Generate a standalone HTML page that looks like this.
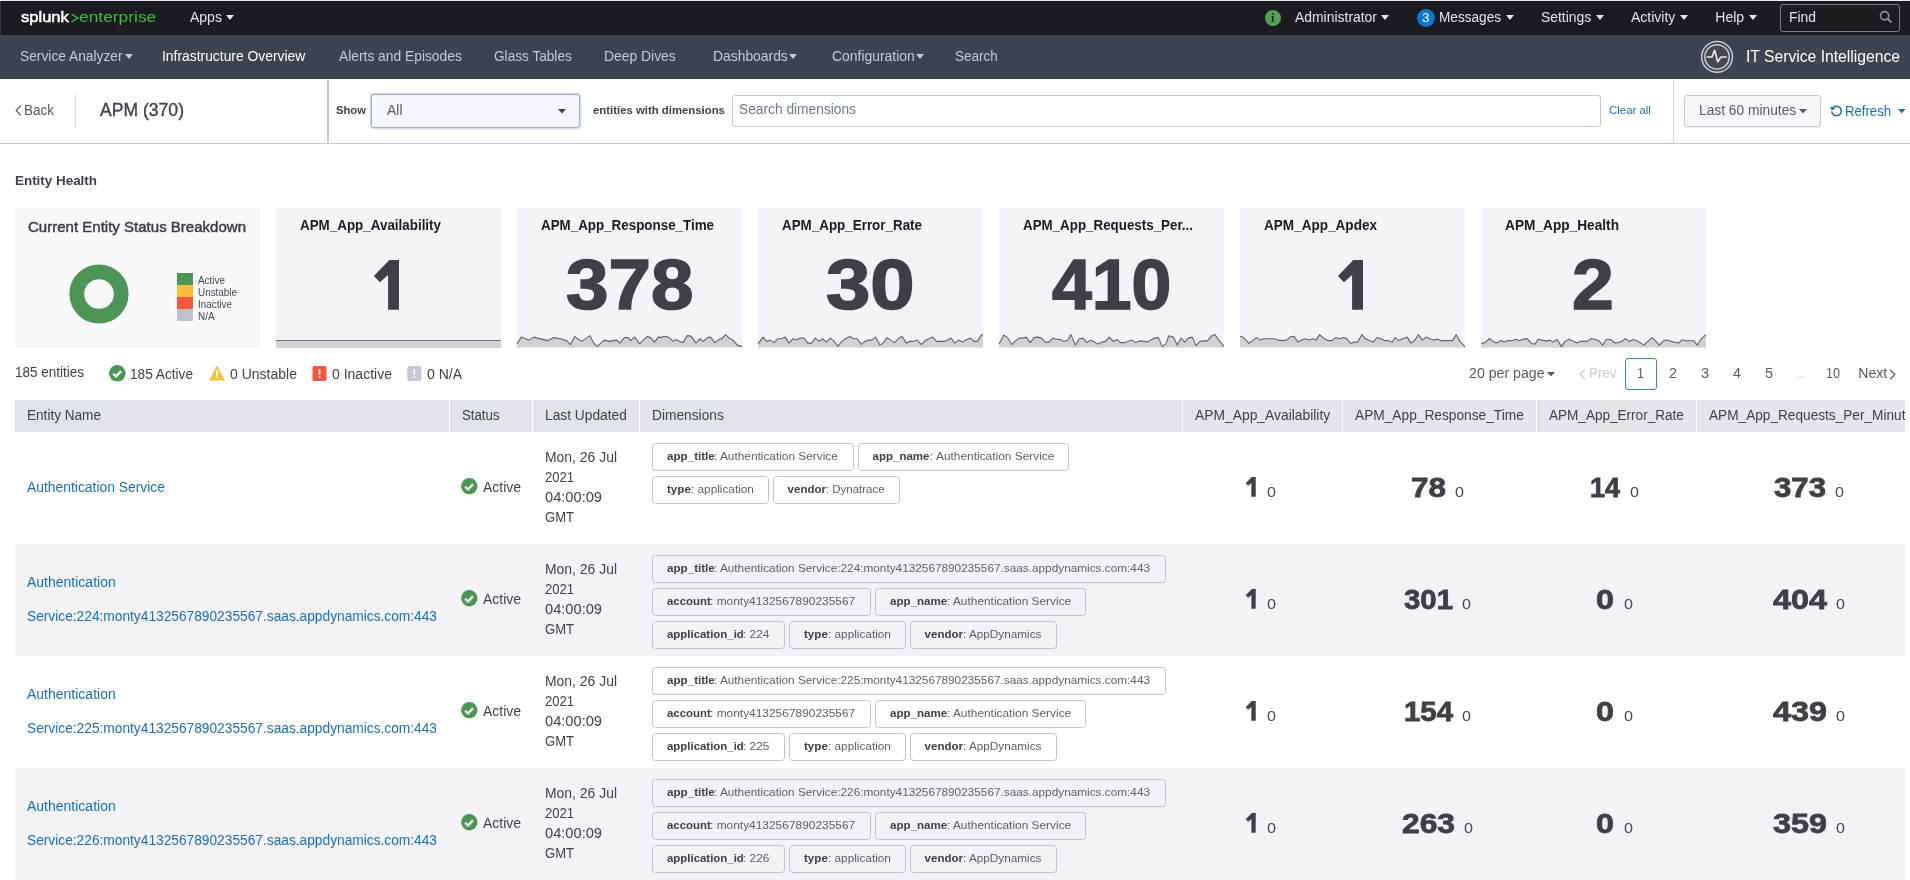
<!DOCTYPE html>
<html><head><meta charset="utf-8"><title>ITSI Infrastructure Overview</title>
<style>
html,body{margin:0;padding:0}
body{width:1910px;height:880px;overflow:hidden;position:relative;background:#fff;font-family:"Liberation Sans",sans-serif;}
span{display:block}
svg{position:absolute;overflow:visible}
</style></head><body><div style="position:absolute;left:0;top:0;width:1910px;height:880px;will-change:transform;">
<div style="position:absolute;left:0px;top:0px;width:1910px;height:35px;background:#1a1c21;"></div>
<div style="position:absolute;left:0px;top:0px;width:1910px;height:1px;background:#ececec;"></div>
<div style="position:absolute;left:0;top:1px;width:1px;height:78px;background:rgba(255,255,255,0.13)"></div>
<span style="position:absolute;left:20.5px;top:9.38px;font-size:15.5px;line-height:1;color:#ffffff;font-weight:400;white-space:nowrap;-webkit-text-stroke:0.55px #fff;transform:scaleX(1.0667);transform-origin:0 0;">splunk</span>
<svg style="left:70.5px;top:13px" width="8" height="10" viewBox="0 0 8 10"><path d="M0.6 1.2L6.8 5L0.6 8.8" fill="none" stroke="#3fba3f" stroke-width="1.4"/></svg>
<span style="position:absolute;left:79.3px;top:9.38px;font-size:15.5px;line-height:1;color:#3fba3f;font-weight:400;white-space:nowrap;transform:scaleX(1.1213);transform-origin:0 0;">enterprise</span>
<span style="position:absolute;left:190px;top:10.15px;font-size:14px;line-height:1;color:#e1e6eb;font-weight:400;white-space:nowrap;">Apps</span>
<svg style="left:226px;top:15px" width="8" height="5" viewBox="0 0 8 5"><path d="M0 0H8L4.0 5Z" fill="#e1e6eb"/></svg>
<div style="position:absolute;left:1264.6px;top:9.6px;width:16.4px;height:16.4px;border-radius:9px;background:#53a051"></div>
<span style="position:absolute;left:1271px;top:12.14px;font-size:12px;line-height:1;color:#1a1c20;font-weight:700;white-space:nowrap;font-family:'Liberation Serif',serif;">i</span>
<span style="position:absolute;left:1295px;top:10.15px;font-size:14px;line-height:1;color:#e1e6eb;font-weight:400;white-space:nowrap;transform:scaleX(0.9943);transform-origin:0 0;">Administrator</span>
<svg style="left:1381px;top:15px" width="8" height="5" viewBox="0 0 8 5"><path d="M0 0H8L4.0 5Z" fill="#e1e6eb"/></svg>
<div style="position:absolute;left:1416.6px;top:8.6px;width:18.4px;height:18.4px;border-radius:10px;background:#0877d6"></div>
<span style="position:absolute;left:1422px;top:11.17px;font-size:13.5px;line-height:1;color:#ffffff;font-weight:400;white-space:nowrap;">3</span>
<span style="position:absolute;left:1439.4px;top:10.15px;font-size:14px;line-height:1;color:#e1e6eb;font-weight:400;white-space:nowrap;transform:scaleX(0.9716);transform-origin:0 0;">Messages</span>
<svg style="left:1506px;top:15px" width="8" height="5" viewBox="0 0 8 5"><path d="M0 0H8L4.0 5Z" fill="#e1e6eb"/></svg>
<span style="position:absolute;left:1541.3px;top:10.15px;font-size:14px;line-height:1;color:#e1e6eb;font-weight:400;white-space:nowrap;transform:scaleX(0.9922);transform-origin:0 0;">Settings</span>
<svg style="left:1596px;top:15px" width="8" height="5" viewBox="0 0 8 5"><path d="M0 0H8L4.0 5Z" fill="#e1e6eb"/></svg>
<span style="position:absolute;left:1631px;top:10.15px;font-size:14px;line-height:1;color:#e1e6eb;font-weight:400;white-space:nowrap;">Activity</span>
<svg style="left:1680px;top:15px" width="8" height="5" viewBox="0 0 8 5"><path d="M0 0H8L4.0 5Z" fill="#e1e6eb"/></svg>
<span style="position:absolute;left:1715.3px;top:10.15px;font-size:14px;line-height:1;color:#e1e6eb;font-weight:400;white-space:nowrap;">Help</span>
<svg style="left:1749px;top:15px" width="8" height="5" viewBox="0 0 8 5"><path d="M0 0H8L4.0 5Z" fill="#e1e6eb"/></svg>
<div style="position:absolute;left:1780px;top:4px;width:118px;height:26px;background:#1c1b20;border:1px solid #7a7f87;border-radius:3px;"></div>
<span style="position:absolute;left:1789px;top:10.15px;font-size:14px;line-height:1;color:#e1e6eb;font-weight:400;white-space:nowrap;transform:scaleX(0.9914);transform-origin:0 0;">Find</span>
<svg style="left:1879px;top:10px" width="14" height="14" viewBox="0 0 14 14"><circle cx="5.6" cy="5.7" r="4.1" fill="none" stroke="#8d9096" stroke-width="1.7"/><path d="M8.7 8.8L12 12" stroke="#8d9096" stroke-width="2" stroke-linecap="round"/></svg>
<div style="position:absolute;left:0px;top:35px;width:1910px;height:44px;background:#3d434f;"></div>
<span style="position:absolute;left:20.2px;top:49.25px;font-size:14px;line-height:1;color:#c3cbd4;font-weight:400;white-space:nowrap;transform:scaleX(0.9839);transform-origin:0 0;">Service Analyzer</span>
<svg style="left:125px;top:54px" width="8" height="5" viewBox="0 0 8 5"><path d="M0 0H8L4.0 5Z" fill="#c3cbd4"/></svg>
<span style="position:absolute;left:162.3px;top:49.25px;font-size:14px;line-height:1;color:#ffffff;font-weight:400;white-space:nowrap;transform:scaleX(0.9902);transform-origin:0 0;">Infrastructure Overview</span>
<span style="position:absolute;left:338.7px;top:49.25px;font-size:14px;line-height:1;color:#c3cbd4;font-weight:400;white-space:nowrap;transform:scaleX(0.9861);transform-origin:0 0;">Alerts and Episodes</span>
<span style="position:absolute;left:493.7px;top:49.25px;font-size:14px;line-height:1;color:#c3cbd4;font-weight:400;white-space:nowrap;transform:scaleX(0.9736);transform-origin:0 0;">Glass Tables</span>
<span style="position:absolute;left:603.7px;top:49.25px;font-size:14px;line-height:1;color:#c3cbd4;font-weight:400;white-space:nowrap;transform:scaleX(0.9921);transform-origin:0 0;">Deep Dives</span>
<span style="position:absolute;left:712.7px;top:49.25px;font-size:14px;line-height:1;color:#c3cbd4;font-weight:400;white-space:nowrap;transform:scaleX(0.9907);transform-origin:0 0;">Dashboards</span>
<svg style="left:789px;top:54px" width="8" height="5" viewBox="0 0 8 5"><path d="M0 0H8L4.0 5Z" fill="#c3cbd4"/></svg>
<span style="position:absolute;left:831.7px;top:49.25px;font-size:14px;line-height:1;color:#c3cbd4;font-weight:400;white-space:nowrap;transform:scaleX(0.9942);transform-origin:0 0;">Configuration</span>
<svg style="left:916px;top:54px" width="8" height="5" viewBox="0 0 8 5"><path d="M0 0H8L4.0 5Z" fill="#c3cbd4"/></svg>
<span style="position:absolute;left:954.7px;top:49.25px;font-size:14px;line-height:1;color:#c3cbd4;font-weight:400;white-space:nowrap;transform:scaleX(0.9648);transform-origin:0 0;">Search</span>
<svg style="left:1700px;top:40px" width="34" height="34" viewBox="0 0 34 34"><circle cx="17.05" cy="16.9" r="15.4" fill="none" stroke="#c9cdd8" stroke-width="1.5"/><circle cx="17.05" cy="16.9" r="12.2" fill="#46484e" stroke="#c9cdd8" stroke-width="1.5"/><path d="M6.7 17H12L14.6 10.3L17.7 21.8L21 17H26.8" fill="none" stroke="#e6e6ea" stroke-width="1.7" stroke-linejoin="round"/></svg>
<span style="position:absolute;left:1745.6px;top:48.03px;font-size:16.5px;line-height:1;color:#ffffff;font-weight:400;white-space:nowrap;transform:scaleX(0.9504);transform-origin:0 0;">IT Service Intelligence</span>
<div style="position:absolute;left:0px;top:143px;width:1910px;height:1px;background:#c3cbd4;"></div>
<div style="position:absolute;left:327px;top:80px;width:2px;height:63px;background:#c3cbd4;"></div>
<div style="position:absolute;left:1673px;top:80px;width:1px;height:63px;background:#d5dae0;"></div>
<svg style="left:15px;top:105px" width="7" height="11" viewBox="0 0 7 11"><path d="M5.8 0.8L1.2 5.5L5.8 10.2" fill="none" stroke="#5c6773" stroke-width="1.3"/></svg>
<span style="position:absolute;left:24px;top:103.15px;font-size:14px;line-height:1;color:#4f5660;font-weight:400;white-space:nowrap;transform:scaleX(0.9639);transform-origin:0 0;">Back</span>
<div style="position:absolute;left:75px;top:95px;width:1px;height:32px;background:#d5dae0;"></div>
<span style="position:absolute;left:100px;top:102.19px;font-size:17.5px;line-height:1;color:#3e424a;font-weight:400;white-space:nowrap;-webkit-text-stroke:0.35px #3e424a;transform:scaleX(1.0043);transform-origin:0 0;">APM (370)</span>
<span style="position:absolute;left:335.7px;top:105.17px;font-size:11.5px;line-height:1;color:#3e424a;font-weight:700;white-space:nowrap;transform:scaleX(0.9748);transform-origin:0 0;">Show</span>
<div style="position:absolute;left:371.3px;top:94.2px;width:206.6px;height:31.4px;background:#f5f6fb;border:1px solid #a3aec4;border-radius:3px;box-shadow:0 0 0 1.3px #d3d9ec;"></div>
<span style="position:absolute;left:386.8px;top:103.15px;font-size:14px;line-height:1;color:#565d66;font-weight:400;white-space:nowrap;transform:scaleX(0.9960);transform-origin:0 0;">All</span>
<svg style="left:557.6px;top:108.5px" width="8" height="4.5" viewBox="0 0 8 4.5"><path d="M0 0H8L4.0 4.5Z" fill="#3c444d"/></svg>
<span style="position:absolute;left:592.7px;top:105.17px;font-size:11.5px;line-height:1;color:#3e424a;font-weight:700;white-space:nowrap;transform:scaleX(0.9876);transform-origin:0 0;">entities with dimensions</span>
<div style="position:absolute;left:732px;top:95px;width:867px;height:30.299999999999997px;background:#fff;border:1px solid #c3cbd4;border-radius:3px;"></div>
<span style="position:absolute;left:739px;top:102.15px;font-size:14px;line-height:1;color:#6b7785;font-weight:400;white-space:nowrap;transform:scaleX(0.9827);transform-origin:0 0;">Search dimensions</span>
<span style="position:absolute;left:1608.5px;top:105.07px;font-size:11.5px;line-height:1;color:#1a6fb5;font-weight:400;white-space:nowrap;transform:scaleX(0.9932);transform-origin:0 0;">Clear all</span>
<div style="position:absolute;left:1684.2px;top:95.4px;width:134.4px;height:29.4px;background:#f6f6fa;border:1px solid #c3cbd4;border-radius:3px;box-shadow:0 1px 1px rgba(0,0,0,0.08);"></div>
<span style="position:absolute;left:1699px;top:103.35px;font-size:14px;line-height:1;color:#565d66;font-weight:400;white-space:nowrap;transform:scaleX(0.9834);transform-origin:0 0;">Last 60 minutes</span>
<svg style="left:1798.6px;top:108.6px" width="8" height="4.5" viewBox="0 0 8 4.5"><path d="M0 0H8L4.0 4.5Z" fill="#565d66"/></svg>
<svg style="left:1830px;top:104px" width="13" height="13" viewBox="0 0 13 13"><path d="M2.4 4.4A4.8 4.8 0 1 1 1.7 7.4" fill="none" stroke="#1a6fb5" stroke-width="1.5"/><path d="M0.2 2.6L1.6 6.4L5.2 4.4Z" fill="#1a6fb5"/></svg>
<span style="position:absolute;left:1845.4px;top:103.75px;font-size:14px;line-height:1;color:#1a6fb5;font-weight:400;white-space:nowrap;transform:scaleX(0.9402);transform-origin:0 0;">Refresh</span>
<svg style="left:1897.6px;top:108.8px" width="7.4" height="4.5" viewBox="0 0 7.4 4.5"><path d="M0 0H7.4L3.7 4.5Z" fill="#1a6fb5"/></svg>
<span style="position:absolute;left:15px;top:173.57px;font-size:13.5px;line-height:1;color:#3e424a;font-weight:700;white-space:nowrap;transform:scaleX(0.9938);transform-origin:0 0;">Entity Health</span>
<div style="position:absolute;left:15px;top:208px;width:245px;height:139.6px;background:#f8f8fb;"></div>
<span style="position:absolute;left:28.3px;top:219.48px;font-size:15.5px;line-height:1;color:#3a3d45;font-weight:400;white-space:nowrap;-webkit-text-stroke:0.45px #3a3d45;transform:scaleX(0.9695);transform-origin:0 0;">Current Entity Status Breakdown</span>
<svg style="left:68.6px;top:263.5px" width="60" height="60" viewBox="0 0 60 60"><circle cx="30" cy="30" r="22.2" fill="none" stroke="#4d9554" stroke-width="14.7"/></svg>
<div style="position:absolute;left:177px;top:273px;width:16px;height:12px;background:#4d9554;"></div>
<span style="position:absolute;left:198.2px;top:276.14px;font-size:10px;line-height:1;color:#45484f;font-weight:400;white-space:nowrap;transform:scaleX(0.9914);transform-origin:0 0;">Active</span>
<div style="position:absolute;left:177px;top:285px;width:16px;height:12px;background:#f8be34;"></div>
<span style="position:absolute;left:198.2px;top:288.14px;font-size:10px;line-height:1;color:#45484f;font-weight:400;white-space:nowrap;transform:scaleX(0.9881);transform-origin:0 0;">Unstable</span>
<div style="position:absolute;left:177px;top:297px;width:16px;height:12px;background:#f1583e;"></div>
<span style="position:absolute;left:198.2px;top:300.14px;font-size:10px;line-height:1;color:#45484f;font-weight:400;white-space:nowrap;transform:scaleX(0.9864);transform-origin:0 0;">Inactive</span>
<div style="position:absolute;left:177px;top:309px;width:16px;height:12px;background:#bcc3d0;"></div>
<span style="position:absolute;left:198.2px;top:312.14px;font-size:10px;line-height:1;color:#45484f;font-weight:400;white-space:nowrap;transform:scaleX(0.9897);transform-origin:0 0;">N/A</span>
<div style="position:absolute;left:276px;top:208px;width:225px;height:139.6px;background:#f4f4f8;"></div>
<span style="position:absolute;left:300px;top:218.45px;font-size:14px;line-height:1;color:#1a1c20;font-weight:700;white-space:nowrap;transform:scaleX(0.9573);transform-origin:0 0;">APM_App_Availability</span>
<svg style="left:0;top:0" width="1910" height="880"><polygon points="389.30,260.10 399.00,260.10 399.00,309.70 388.10,309.70 388.10,275.10 380.00,282.20 373.90,275.90" fill="#403f46"/></svg>
<div style="position:absolute;left:276px;top:340.6px;width:225px;height:7.0px;background:#d2d2d8;"></div>
<div style="position:absolute;left:276px;top:339.6px;width:225px;height:1.5px;background:#6f6f77;"></div>
<div style="position:absolute;left:517px;top:208px;width:225px;height:139.6px;background:#f4f4f8;"></div>
<span style="position:absolute;left:541px;top:218.45px;font-size:14px;line-height:1;color:#1a1c20;font-weight:700;white-space:nowrap;transform:scaleX(0.9557);transform-origin:0 0;">APM_App_Response_Time</span>
<span style="position:absolute;left:565.6px;top:249.81px;font-size:70.4px;line-height:1;color:#403f46;font-weight:700;white-space:nowrap;-webkit-text-stroke:1.6px #403f46;transform:scaleX(1.0847);transform-origin:0 0;">378</span>
<svg style="left:0;top:0" width="1910" height="360"><polygon points="517,347.6 517.0,343.9 521.3,337.1 528.8,340.1 533.9,337.1 542.7,339.4 547.7,340.6 554.0,337.6 560.3,338.8 566.5,340.6 570.3,344.4 574.8,336.6 581.6,341.4 589.9,335.6 593.4,342.6 597.2,346.4 604.2,340.1 609.3,341.4 616.8,340.1 619.8,343.1 624.4,337.6 628.1,337.6 630.6,340.6 634.9,337.1 639.4,343.9 647.0,336.6 650.7,337.6 654.5,342.1 658.3,337.1 660.8,337.6 664.6,336.3 668.3,337.1 673.4,341.4 675.9,339.6 680.9,342.1 683.4,342.1 687.2,335.6 690.9,336.1 696.0,343.1 699.7,338.8 703.5,341.4 707.3,337.6 710.6,337.1 714.8,342.6 718.6,339.6 721.6,338.8 725.6,334.6 729.9,338.8 732.4,339.6 737.4,345.1 742.0,346.4 742,347.6" fill="#d0d0d6"/><polyline points="517.0,343.9 521.3,337.1 528.8,340.1 533.9,337.1 542.7,339.4 547.7,340.6 554.0,337.6 560.3,338.8 566.5,340.6 570.3,344.4 574.8,336.6 581.6,341.4 589.9,335.6 593.4,342.6 597.2,346.4 604.2,340.1 609.3,341.4 616.8,340.1 619.8,343.1 624.4,337.6 628.1,337.6 630.6,340.6 634.9,337.1 639.4,343.9 647.0,336.6 650.7,337.6 654.5,342.1 658.3,337.1 660.8,337.6 664.6,336.3 668.3,337.1 673.4,341.4 675.9,339.6 680.9,342.1 683.4,342.1 687.2,335.6 690.9,336.1 696.0,343.1 699.7,338.8 703.5,341.4 707.3,337.6 710.6,337.1 714.8,342.6 718.6,339.6 721.6,338.8 725.6,334.6 729.9,338.8 732.4,339.6 737.4,345.1 742.0,346.4" fill="none" stroke="#62626a" stroke-width="1.1" stroke-linejoin="round"/></svg>
<div style="position:absolute;left:758px;top:208px;width:225px;height:139.6px;background:#f4f4f8;"></div>
<span style="position:absolute;left:782px;top:218.45px;font-size:14px;line-height:1;color:#1a1c20;font-weight:700;white-space:nowrap;transform:scaleX(0.9572);transform-origin:0 0;">APM_App_Error_Rate</span>
<span style="position:absolute;left:826px;top:249.81px;font-size:70.4px;line-height:1;color:#403f46;font-weight:700;white-space:nowrap;-webkit-text-stroke:1.6px #403f46;transform:scaleX(1.1316);transform-origin:0 0;">30</span>
<svg style="left:0;top:0" width="1910" height="360"><polygon points="758,347.6 758.0,343.9 763.1,337.1 766.8,341.4 770.1,340.1 773.9,342.6 777.7,338.8 781.4,338.8 785.2,337.1 789.0,343.1 792.7,338.8 796.5,340.1 800.3,338.1 804.0,338.1 807.8,343.1 811.6,343.1 815.4,338.1 819.1,341.4 822.9,338.8 826.2,342.1 830.4,338.1 834.2,341.4 838.0,346.4 841.7,341.4 845.5,338.8 849.8,336.6 853.6,338.8 857.3,338.8 861.3,344.4 864.9,341.4 868.6,340.1 871.9,340.1 875.7,337.1 879.9,345.1 883.2,343.1 887.0,337.6 890.7,340.1 894.5,342.6 898.3,338.8 902.1,336.3 906.3,343.1 909.6,341.4 913.4,341.4 917.1,340.1 921.4,344.6 925.2,340.6 928.9,338.8 932.7,337.1 936.5,341.4 940.3,341.4 944.8,341.4 951.1,338.1 954.8,343.1 958.6,340.1 962.4,341.9 966.1,340.1 970.4,338.1 974.2,341.4 977.5,341.4 981.2,335.1 983.0,334.6 983,347.6" fill="#d0d0d6"/><polyline points="758.0,343.9 763.1,337.1 766.8,341.4 770.1,340.1 773.9,342.6 777.7,338.8 781.4,338.8 785.2,337.1 789.0,343.1 792.7,338.8 796.5,340.1 800.3,338.1 804.0,338.1 807.8,343.1 811.6,343.1 815.4,338.1 819.1,341.4 822.9,338.8 826.2,342.1 830.4,338.1 834.2,341.4 838.0,346.4 841.7,341.4 845.5,338.8 849.8,336.6 853.6,338.8 857.3,338.8 861.3,344.4 864.9,341.4 868.6,340.1 871.9,340.1 875.7,337.1 879.9,345.1 883.2,343.1 887.0,337.6 890.7,340.1 894.5,342.6 898.3,338.8 902.1,336.3 906.3,343.1 909.6,341.4 913.4,341.4 917.1,340.1 921.4,344.6 925.2,340.6 928.9,338.8 932.7,337.1 936.5,341.4 940.3,341.4 944.8,341.4 951.1,338.1 954.8,343.1 958.6,340.1 962.4,341.9 966.1,340.1 970.4,338.1 974.2,341.4 977.5,341.4 981.2,335.1 983.0,334.6" fill="none" stroke="#62626a" stroke-width="1.1" stroke-linejoin="round"/></svg>
<div style="position:absolute;left:999px;top:208px;width:225px;height:139.6px;background:#f4f4f8;"></div>
<span style="position:absolute;left:1023px;top:218.45px;font-size:14px;line-height:1;color:#1a1c20;font-weight:700;white-space:nowrap;transform:scaleX(0.9541);transform-origin:0 0;">APM_App_Requests_Per...</span>
<span style="position:absolute;left:1051.6px;top:249.81px;font-size:70.4px;line-height:1;color:#403f46;font-weight:700;white-space:nowrap;-webkit-text-stroke:1.6px #403f46;transform:scaleX(1.0166);transform-origin:0 0;">410</span>
<svg style="left:0;top:0" width="1910" height="360"><polygon points="999,347.6 999.0,343.9 1003.8,335.1 1007.6,337.6 1011.4,344.6 1015.1,341.4 1018.9,338.1 1022.7,338.1 1026.4,337.1 1030.2,342.6 1034.0,337.6 1037.8,337.1 1041.5,338.1 1045.3,342.1 1049.1,342.1 1052.8,338.1 1056.6,339.4 1060.4,339.6 1064.1,341.4 1067.9,340.1 1070.9,334.6 1075.4,345.1 1079.2,338.8 1083.0,338.1 1086.8,342.6 1090.5,340.1 1094.3,342.1 1098.1,343.9 1101.8,342.1 1105.6,341.4 1109.4,337.1 1113.1,341.4 1116.9,339.6 1120.7,342.6 1124.5,342.6 1128.2,341.4 1132.0,340.1 1135.8,342.6 1139.5,340.9 1143.3,341.4 1147.1,341.9 1150.8,340.1 1154.6,338.1 1158.4,337.6 1162.2,346.4 1165.9,343.9 1168.9,335.8 1173.5,337.1 1177.2,345.1 1181.0,338.1 1184.8,342.1 1188.5,338.1 1192.3,337.1 1196.1,345.6 1199.9,341.4 1203.6,340.9 1207.4,340.9 1211.2,336.3 1214.9,334.3 1218.7,340.1 1224.0,346.4 1224,347.6" fill="#d0d0d6"/><polyline points="999.0,343.9 1003.8,335.1 1007.6,337.6 1011.4,344.6 1015.1,341.4 1018.9,338.1 1022.7,338.1 1026.4,337.1 1030.2,342.6 1034.0,337.6 1037.8,337.1 1041.5,338.1 1045.3,342.1 1049.1,342.1 1052.8,338.1 1056.6,339.4 1060.4,339.6 1064.1,341.4 1067.9,340.1 1070.9,334.6 1075.4,345.1 1079.2,338.8 1083.0,338.1 1086.8,342.6 1090.5,340.1 1094.3,342.1 1098.1,343.9 1101.8,342.1 1105.6,341.4 1109.4,337.1 1113.1,341.4 1116.9,339.6 1120.7,342.6 1124.5,342.6 1128.2,341.4 1132.0,340.1 1135.8,342.6 1139.5,340.9 1143.3,341.4 1147.1,341.9 1150.8,340.1 1154.6,338.1 1158.4,337.6 1162.2,346.4 1165.9,343.9 1168.9,335.8 1173.5,337.1 1177.2,345.1 1181.0,338.1 1184.8,342.1 1188.5,338.1 1192.3,337.1 1196.1,345.6 1199.9,341.4 1203.6,340.9 1207.4,340.9 1211.2,336.3 1214.9,334.3 1218.7,340.1 1224.0,346.4" fill="none" stroke="#62626a" stroke-width="1.1" stroke-linejoin="round"/></svg>
<div style="position:absolute;left:1240px;top:208px;width:225px;height:139.6px;background:#f4f4f8;"></div>
<span style="position:absolute;left:1264px;top:218.45px;font-size:14px;line-height:1;color:#1a1c20;font-weight:700;white-space:nowrap;transform:scaleX(0.9684);transform-origin:0 0;">APM_App_Apdex</span>
<svg style="left:0;top:0" width="1910" height="880"><polygon points="1353.30,260.10 1363.00,260.10 1363.00,309.70 1352.10,309.70 1352.10,275.10 1344.00,282.20 1337.90,275.90" fill="#403f46"/></svg>
<svg style="left:0;top:0" width="1910" height="360"><polygon points="1240,347.6 1240.0,336.3 1243.8,337.6 1248.9,343.4 1252.6,340.6 1256.4,337.6 1260.2,340.1 1263.9,338.8 1269.0,338.8 1274.0,338.8 1277.8,340.1 1282.8,340.6 1286.6,340.1 1290.3,336.8 1294.1,336.3 1297.9,342.1 1301.6,340.1 1305.4,338.8 1309.2,340.1 1312.9,338.8 1316.0,340.1 1319.7,334.6 1324.3,338.8 1328.0,340.6 1331.8,340.6 1335.6,337.6 1339.3,338.8 1343.1,337.6 1346.9,338.8 1350.6,343.4 1354.4,342.1 1357.7,342.1 1362.0,334.6 1365.7,338.8 1369.5,340.6 1373.3,341.9 1377.0,337.6 1380.8,338.8 1384.6,340.6 1388.3,340.6 1392.1,342.1 1395.1,337.6 1398.9,340.6 1402.7,338.8 1407.2,337.1 1411.0,343.1 1414.7,340.1 1418.5,334.6 1422.3,340.1 1426.0,337.1 1429.8,338.8 1433.6,340.1 1437.3,339.1 1441.1,340.6 1446.1,340.6 1452.4,340.6 1456.2,334.6 1460.0,341.4 1465.0,346.9 1465,347.6" fill="#d0d0d6"/><polyline points="1240.0,336.3 1243.8,337.6 1248.9,343.4 1252.6,340.6 1256.4,337.6 1260.2,340.1 1263.9,338.8 1269.0,338.8 1274.0,338.8 1277.8,340.1 1282.8,340.6 1286.6,340.1 1290.3,336.8 1294.1,336.3 1297.9,342.1 1301.6,340.1 1305.4,338.8 1309.2,340.1 1312.9,338.8 1316.0,340.1 1319.7,334.6 1324.3,338.8 1328.0,340.6 1331.8,340.6 1335.6,337.6 1339.3,338.8 1343.1,337.6 1346.9,338.8 1350.6,343.4 1354.4,342.1 1357.7,342.1 1362.0,334.6 1365.7,338.8 1369.5,340.6 1373.3,341.9 1377.0,337.6 1380.8,338.8 1384.6,340.6 1388.3,340.6 1392.1,342.1 1395.1,337.6 1398.9,340.6 1402.7,338.8 1407.2,337.1 1411.0,343.1 1414.7,340.1 1418.5,334.6 1422.3,340.1 1426.0,337.1 1429.8,338.8 1433.6,340.1 1437.3,339.1 1441.1,340.6 1446.1,340.6 1452.4,340.6 1456.2,334.6 1460.0,341.4 1465.0,346.9" fill="none" stroke="#62626a" stroke-width="1.1" stroke-linejoin="round"/></svg>
<div style="position:absolute;left:1481px;top:208px;width:225px;height:139.6px;background:#f4f4f8;"></div>
<span style="position:absolute;left:1505px;top:218.45px;font-size:14px;line-height:1;color:#1a1c20;font-weight:700;white-space:nowrap;transform:scaleX(0.9770);transform-origin:0 0;">APM_App_Health</span>
<span style="position:absolute;left:1572.4px;top:249.81px;font-size:70.4px;line-height:1;color:#403f46;font-weight:700;white-space:nowrap;-webkit-text-stroke:1.6px #403f46;transform:scaleX(1.0675);transform-origin:0 0;">2</span>
<svg style="left:0;top:0" width="1910" height="360"><polygon points="1481,347.6 1481.0,343.2 1485.1,342.6 1489.5,338.5 1493.2,341.6 1496.8,343.0 1500.8,340.4 1504.2,342.0 1507.7,340.4 1511.5,340.7 1515.9,339.2 1519.4,340.7 1523.4,339.1 1527.2,338.6 1530.9,342.9 1534.7,344.3 1538.5,339.2 1542.3,340.1 1546.0,341.1 1549.8,340.1 1552.9,342.0 1557.3,339.5 1561.4,346.6 1564.9,341.6 1568.9,339.2 1573.0,341.0 1576.8,342.9 1580.6,341.4 1584.4,341.4 1587.5,341.1 1591.6,338.5 1595.7,339.5 1598.8,340.7 1602.6,345.1 1606.3,339.5 1610.7,339.5 1614.8,343.0 1618.3,342.6 1621.4,341.6 1625.4,338.8 1629.3,341.4 1633.1,339.5 1637.1,340.7 1644.0,345.1 1648.4,340.7 1652.0,337.6 1655.3,340.7 1659.4,345.1 1663.5,340.7 1667.3,340.1 1671.1,341.4 1674.8,342.2 1678.6,343.0 1682.4,339.7 1686.1,340.7 1689.9,340.7 1693.7,340.7 1697.2,345.1 1701.2,338.8 1706.0,334.7 1706,347.6" fill="#d0d0d6"/><polyline points="1481.0,343.2 1485.1,342.6 1489.5,338.5 1493.2,341.6 1496.8,343.0 1500.8,340.4 1504.2,342.0 1507.7,340.4 1511.5,340.7 1515.9,339.2 1519.4,340.7 1523.4,339.1 1527.2,338.6 1530.9,342.9 1534.7,344.3 1538.5,339.2 1542.3,340.1 1546.0,341.1 1549.8,340.1 1552.9,342.0 1557.3,339.5 1561.4,346.6 1564.9,341.6 1568.9,339.2 1573.0,341.0 1576.8,342.9 1580.6,341.4 1584.4,341.4 1587.5,341.1 1591.6,338.5 1595.7,339.5 1598.8,340.7 1602.6,345.1 1606.3,339.5 1610.7,339.5 1614.8,343.0 1618.3,342.6 1621.4,341.6 1625.4,338.8 1629.3,341.4 1633.1,339.5 1637.1,340.7 1644.0,345.1 1648.4,340.7 1652.0,337.6 1655.3,340.7 1659.4,345.1 1663.5,340.7 1667.3,340.1 1671.1,341.4 1674.8,342.2 1678.6,343.0 1682.4,339.7 1686.1,340.7 1689.9,340.7 1693.7,340.7 1697.2,345.1 1701.2,338.8 1706.0,334.7" fill="none" stroke="#62626a" stroke-width="1.1" stroke-linejoin="round"/></svg>
<span style="position:absolute;left:15px;top:365.45px;font-size:14px;line-height:1;color:#3e424a;font-weight:400;white-space:nowrap;transform:scaleX(0.9636);transform-origin:0 0;">185 entities</span>
<svg style="left:109px;top:365.4px" width="16.6" height="16.6" viewBox="0 0 16 16"><circle cx="8" cy="8" r="8" fill="#4d9554"/><path d="M4 8.5L6.9 11L11.5 5.9" fill="none" stroke="#fff" stroke-width="2.2"/></svg>
<span style="position:absolute;left:130px;top:367.15px;font-size:14px;line-height:1;color:#3e424a;font-weight:400;white-space:nowrap;transform:scaleX(0.9751);transform-origin:0 0;">185 Active</span>
<svg style="left:208.8px;top:365.2px" width="16" height="16" viewBox="0 0 16 16"><path d="M8 0.4L15.8 15.4H0.2Z" fill="#f8be34"/><rect x="7.1" y="5" width="1.8" height="5.6" fill="#fff"/><rect x="7.1" y="11.6" width="1.8" height="1.8" fill="#fff"/></svg>
<span style="position:absolute;left:230px;top:367.15px;font-size:14px;line-height:1;color:#3e424a;font-weight:400;white-space:nowrap;">0 Unstable</span>
<svg style="left:311.8px;top:365.8px" width="15" height="15" viewBox="0 0 15 16"><rect width="15" height="16" rx="2" fill="#f1583e"/><rect x="6.6" y="3.5" width="1.8" height="5.8" fill="#fff"/><rect x="6.6" y="10.6" width="1.8" height="1.9" fill="#fff"/></svg>
<span style="position:absolute;left:332px;top:367.15px;font-size:14px;line-height:1;color:#3e424a;font-weight:400;white-space:nowrap;">0 Inactive</span>
<svg style="left:407px;top:366.2px" width="14.6" height="15" viewBox="0 0 15 16"><rect width="15" height="16" rx="2" fill="#c6c9d0"/><rect x="6.6" y="3.5" width="1.8" height="5.8" fill="#fff"/><rect x="6.6" y="10.6" width="1.8" height="1.9" fill="#fff"/></svg>
<span style="position:absolute;left:427px;top:367.15px;font-size:14px;line-height:1;color:#3e424a;font-weight:400;white-space:nowrap;">0 N/A</span>
<span style="position:absolute;left:1469.4px;top:366.45px;font-size:14px;line-height:1;color:#565d66;font-weight:400;white-space:nowrap;transform:scaleX(1.0116);transform-origin:0 0;">20 per page</span>
<svg style="left:1547px;top:372px" width="8" height="4.5" viewBox="0 0 8 4.5"><path d="M0 0H8L4.0 4.5Z" fill="#565d66"/></svg>
<svg style="left:1579px;top:369px" width="7" height="11" viewBox="0 0 7 11"><path d="M5.8 0.8L1.2 5.5L5.8 10.2" fill="none" stroke="#c3cbd4" stroke-width="1.3"/></svg>
<span style="position:absolute;left:1588.5px;top:366.45px;font-size:14px;line-height:1;color:#c3cbd4;font-weight:400;white-space:nowrap;transform:scaleX(0.9550);transform-origin:0 0;">Prev</span>
<div style="position:absolute;left:1625px;top:358px;width:30px;height:30px;background:#fff;border:1px solid #3d7fd0;border-radius:3px;"></div>
<span style="position:absolute;left:1637px;top:366.45px;font-size:14px;line-height:1;color:#565d66;font-weight:400;white-space:nowrap;transform:scaleX(0.8978);transform-origin:0 0;">1</span>
<span style="position:absolute;left:1669px;top:366.45px;font-size:14px;line-height:1;color:#565d66;font-weight:400;white-space:nowrap;transform:scaleX(1.0261);transform-origin:0 0;">2</span>
<span style="position:absolute;left:1701px;top:366.45px;font-size:14px;line-height:1;color:#565d66;font-weight:400;white-space:nowrap;transform:scaleX(1.0261);transform-origin:0 0;">3</span>
<span style="position:absolute;left:1733px;top:366.45px;font-size:14px;line-height:1;color:#565d66;font-weight:400;white-space:nowrap;transform:scaleX(1.0261);transform-origin:0 0;">4</span>
<span style="position:absolute;left:1765px;top:366.45px;font-size:14px;line-height:1;color:#565d66;font-weight:400;white-space:nowrap;transform:scaleX(1.0261);transform-origin:0 0;">5</span>
<span style="position:absolute;left:1826px;top:366.45px;font-size:14px;line-height:1;color:#565d66;font-weight:400;white-space:nowrap;transform:scaleX(0.8987);transform-origin:0 0;">10</span>
<span style="position:absolute;left:1796px;top:368.14px;font-size:12px;line-height:1;color:#c3cbd4;font-weight:400;white-space:nowrap;">...</span>
<span style="position:absolute;left:1858.3px;top:366.45px;font-size:14px;line-height:1;color:#565d66;font-weight:400;white-space:nowrap;">Next</span>
<svg style="left:1889px;top:369px" width="7" height="11" viewBox="0 0 7 11"><path d="M1.2 0.8L5.8 5.5L1.2 10.2" fill="none" stroke="#5c6773" stroke-width="1.3"/></svg>
<div style="position:absolute;left:15px;top:400px;width:1890px;height:32px;background:linear-gradient(90deg,#e0e3ec 0%,#e2e4eb 45%,#e7e5ea 85%,#e6e5eb 100%);"></div>
<div style="position:absolute;left:449px;top:400px;width:1px;height:32px;background:#ffffff;"></div>
<div style="position:absolute;left:532px;top:400px;width:1px;height:32px;background:#ffffff;"></div>
<div style="position:absolute;left:639px;top:400px;width:1px;height:32px;background:#ffffff;"></div>
<div style="position:absolute;left:1182px;top:400px;width:1px;height:32px;background:#ffffff;"></div>
<div style="position:absolute;left:1342px;top:400px;width:1px;height:32px;background:#ffffff;"></div>
<div style="position:absolute;left:1536px;top:400px;width:1px;height:32px;background:#ffffff;"></div>
<div style="position:absolute;left:1696px;top:400px;width:1px;height:32px;background:#ffffff;"></div>
<div style="position:absolute;left:1697px;top:400px;width:208px;height:32px;overflow:hidden">
<span style="position:absolute;left:12px;top:8.15px;font-size:14px;line-height:1;color:#3e424a;font-weight:400;white-space:nowrap;transform:scaleX(0.9745);transform-origin:0 0;">APM_App_Requests_Per_Minute</span>
</div>
<span style="position:absolute;left:27px;top:408.15px;font-size:14px;line-height:1;color:#3e424a;font-weight:400;white-space:nowrap;transform:scaleX(0.9705);transform-origin:0 0;">Entity Name</span>
<span style="position:absolute;left:461.7px;top:408.15px;font-size:14px;line-height:1;color:#3e424a;font-weight:400;white-space:nowrap;transform:scaleX(0.9445);transform-origin:0 0;">Status</span>
<span style="position:absolute;left:545.2px;top:408.15px;font-size:14px;line-height:1;color:#3e424a;font-weight:400;white-space:nowrap;transform:scaleX(0.9820);transform-origin:0 0;">Last Updated</span>
<span style="position:absolute;left:652.2px;top:408.15px;font-size:14px;line-height:1;color:#3e424a;font-weight:400;white-space:nowrap;transform:scaleX(0.9817);transform-origin:0 0;">Dimensions</span>
<span style="position:absolute;left:1194.8px;top:408.15px;font-size:14px;line-height:1;color:#3e424a;font-weight:400;white-space:nowrap;transform:scaleX(0.9889);transform-origin:0 0;">APM_App_Availability</span>
<span style="position:absolute;left:1355.2px;top:408.15px;font-size:14px;line-height:1;color:#3e424a;font-weight:400;white-space:nowrap;transform:scaleX(0.9800);transform-origin:0 0;">APM_App_Response_Time</span>
<span style="position:absolute;left:1548.8px;top:408.15px;font-size:14px;line-height:1;color:#3e424a;font-weight:400;white-space:nowrap;transform:scaleX(0.9677);transform-origin:0 0;">APM_App_Error_Rate</span>
<div style="position:absolute;left:15px;top:432px;width:1890px;height:112px;background:#ffffff;"></div>
<span style="position:absolute;left:27px;top:480.15px;font-size:14px;line-height:1;color:#1a6fb5;font-weight:400;white-space:nowrap;transform:scaleX(0.9906);transform-origin:0 0;">Authentication Service</span>
<svg style="left:461.3px;top:477.6px" width="16.6" height="16.6" viewBox="0 0 16 16"><circle cx="8" cy="8" r="7.9" fill="#4d9554"/><path d="M4 8.5L6.9 11L11.5 5.9" fill="none" stroke="#fff" stroke-width="2.2"/></svg>
<span style="position:absolute;left:483px;top:480.15px;font-size:14px;line-height:1;color:#3e424a;font-weight:400;white-space:nowrap;">Active</span>
<span style="position:absolute;left:545.2px;top:450.15px;font-size:14px;line-height:1;color:#3e424a;font-weight:400;white-space:nowrap;transform:scaleX(0.9948);transform-origin:0 0;">Mon, 26 Jul</span>
<span style="position:absolute;left:545.2px;top:470.15px;font-size:14px;line-height:1;color:#3e424a;font-weight:400;white-space:nowrap;transform:scaleX(0.9308);transform-origin:0 0;">2021</span>
<span style="position:absolute;left:545.2px;top:490.15px;font-size:14px;line-height:1;color:#3e424a;font-weight:400;white-space:nowrap;transform:scaleX(1.0459);transform-origin:0 0;">04:00:09</span>
<span style="position:absolute;left:545.2px;top:510.15px;font-size:14px;line-height:1;color:#3e424a;font-weight:400;white-space:nowrap;transform:scaleX(0.9322);transform-origin:0 0;">GMT</span>
<div style="position:absolute;left:652px;top:443px;width:200px;height:26px;background:transparent;border:1px solid #c2c4cc;border-radius:3.5px;"></div>
<span style="position:absolute;left:666.6px;top:450.77px;font-size:11.5px;line-height:1;color:#3e4147;font-weight:700;white-space:nowrap;transform:scaleX(1.0106);transform-origin:0 0;">app_title</span>
<span style="position:absolute;left:714.4px;top:450.77px;font-size:11.5px;line-height:1;color:#5b5f67;font-weight:400;white-space:nowrap;transform:scaleX(1.0301);transform-origin:0 0;">: Authentication Service</span>
<div style="position:absolute;left:858px;top:443px;width:209px;height:26px;background:transparent;border:1px solid #c2c4cc;border-radius:3.5px;"></div>
<span style="position:absolute;left:872.6px;top:450.77px;font-size:11.5px;line-height:1;color:#3e4147;font-weight:700;white-space:nowrap;">app_name</span>
<span style="position:absolute;left:929.6px;top:450.77px;font-size:11.5px;line-height:1;color:#5b5f67;font-weight:400;white-space:nowrap;transform:scaleX(1.0350);transform-origin:0 0;">: Authentication Service</span>
<div style="position:absolute;left:652px;top:476px;width:115px;height:26px;background:transparent;border:1px solid #c2c4cc;border-radius:3.5px;"></div>
<span style="position:absolute;left:666.6px;top:483.77px;font-size:11.5px;line-height:1;color:#3e4147;font-weight:700;white-space:nowrap;transform:scaleX(1.0103);transform-origin:0 0;">type</span>
<span style="position:absolute;left:690.5px;top:483.77px;font-size:11.5px;line-height:1;color:#5b5f67;font-weight:400;white-space:nowrap;transform:scaleX(1.0248);transform-origin:0 0;">: application</span>
<div style="position:absolute;left:773px;top:476px;width:125px;height:26px;background:transparent;border:1px solid #c2c4cc;border-radius:3.5px;"></div>
<span style="position:absolute;left:787.6px;top:483.77px;font-size:11.5px;line-height:1;color:#3e4147;font-weight:700;white-space:nowrap;">vendor</span>
<span style="position:absolute;left:825.8000000000001px;top:483.77px;font-size:11.5px;line-height:1;color:#5b5f67;font-weight:400;white-space:nowrap;">: Dynatrace</span>
<svg style="left:0;top:0" width="1910" height="880"><polygon points="1251.85,476.90 1255.72,476.90 1255.72,496.70 1251.37,496.70 1251.37,482.89 1248.14,485.72 1245.70,483.21" fill="#403f46"/></svg>
<span style="position:absolute;left:1267px;top:485.35px;font-size:14px;line-height:1;color:#45484f;font-weight:400;white-space:nowrap;transform:scaleX(1.1543);transform-origin:0 0;">0</span>
<span style="position:absolute;left:1411px;top:473.60px;font-size:28px;line-height:1;color:#403f46;font-weight:700;white-space:nowrap;-webkit-text-stroke:0.8px #403f46;transform:scaleX(1.1234);transform-origin:0 0;">78</span>
<span style="position:absolute;left:1455px;top:485.35px;font-size:14px;line-height:1;color:#45484f;font-weight:400;white-space:nowrap;transform:scaleX(1.1543);transform-origin:0 0;">0</span>
<span style="position:absolute;left:1590px;top:473.60px;font-size:28px;line-height:1;color:#403f46;font-weight:700;white-space:nowrap;-webkit-text-stroke:0.8px #403f46;transform:scaleX(0.9629);transform-origin:0 0;">14</span>
<span style="position:absolute;left:1630px;top:485.35px;font-size:14px;line-height:1;color:#45484f;font-weight:400;white-space:nowrap;transform:scaleX(1.1543);transform-origin:0 0;">0</span>
<span style="position:absolute;left:1774px;top:473.60px;font-size:28px;line-height:1;color:#403f46;font-weight:700;white-space:nowrap;-webkit-text-stroke:0.8px #403f46;transform:scaleX(1.1130);transform-origin:0 0;">373</span>
<span style="position:absolute;left:1835px;top:485.35px;font-size:14px;line-height:1;color:#45484f;font-weight:400;white-space:nowrap;transform:scaleX(1.1543);transform-origin:0 0;">0</span>
<div style="position:absolute;left:15px;top:544px;width:1890px;height:112px;background:#f3f3f7;"></div>
<span style="position:absolute;left:27px;top:575.15px;font-size:14px;line-height:1;color:#1a6fb5;font-weight:400;white-space:nowrap;">Authentication</span>
<span style="position:absolute;left:27px;top:609.15px;font-size:14px;line-height:1;color:#1a6fb5;font-weight:400;white-space:nowrap;transform:scaleX(0.9810);transform-origin:0 0;">Service:224:monty4132567890235567.saas.appdynamics.com:443</span>
<svg style="left:461.3px;top:589.6px" width="16.6" height="16.6" viewBox="0 0 16 16"><circle cx="8" cy="8" r="7.9" fill="#4d9554"/><path d="M4 8.5L6.9 11L11.5 5.9" fill="none" stroke="#fff" stroke-width="2.2"/></svg>
<span style="position:absolute;left:483px;top:592.15px;font-size:14px;line-height:1;color:#3e424a;font-weight:400;white-space:nowrap;">Active</span>
<span style="position:absolute;left:545.2px;top:562.15px;font-size:14px;line-height:1;color:#3e424a;font-weight:400;white-space:nowrap;transform:scaleX(0.9948);transform-origin:0 0;">Mon, 26 Jul</span>
<span style="position:absolute;left:545.2px;top:582.15px;font-size:14px;line-height:1;color:#3e424a;font-weight:400;white-space:nowrap;transform:scaleX(0.9308);transform-origin:0 0;">2021</span>
<span style="position:absolute;left:545.2px;top:602.15px;font-size:14px;line-height:1;color:#3e424a;font-weight:400;white-space:nowrap;transform:scaleX(1.0459);transform-origin:0 0;">04:00:09</span>
<span style="position:absolute;left:545.2px;top:622.15px;font-size:14px;line-height:1;color:#3e424a;font-weight:400;white-space:nowrap;transform:scaleX(0.9322);transform-origin:0 0;">GMT</span>
<div style="position:absolute;left:652px;top:555px;width:512px;height:26px;background:transparent;border:1px solid #c2c4cc;border-radius:3.5px;"></div>
<span style="position:absolute;left:666.6px;top:562.77px;font-size:11.5px;line-height:1;color:#3e4147;font-weight:700;white-space:nowrap;transform:scaleX(1.0106);transform-origin:0 0;">app_title</span>
<span style="position:absolute;left:714.4px;top:562.77px;font-size:11.5px;line-height:1;color:#5b5f67;font-weight:400;white-space:nowrap;transform:scaleX(1.0255);transform-origin:0 0;">: Authentication Service:224:monty4132567890235567.saas.appdynamics.com:443</span>
<div style="position:absolute;left:652px;top:588px;width:217px;height:26px;background:transparent;border:1px solid #c2c4cc;border-radius:3.5px;"></div>
<span style="position:absolute;left:666.6px;top:595.77px;font-size:11.5px;line-height:1;color:#3e4147;font-weight:700;white-space:nowrap;transform:scaleX(0.9933);transform-origin:0 0;">account</span>
<span style="position:absolute;left:710.4px;top:595.77px;font-size:11.5px;line-height:1;color:#5b5f67;font-weight:400;white-space:nowrap;transform:scaleX(1.0368);transform-origin:0 0;">: monty4132567890235567</span>
<div style="position:absolute;left:875px;top:588px;width:209px;height:26px;background:transparent;border:1px solid #c2c4cc;border-radius:3.5px;"></div>
<span style="position:absolute;left:889.6px;top:595.77px;font-size:11.5px;line-height:1;color:#3e4147;font-weight:700;white-space:nowrap;transform:scaleX(1.0054);transform-origin:0 0;">app_name</span>
<span style="position:absolute;left:946.8000000000001px;top:595.77px;font-size:11.5px;line-height:1;color:#5b5f67;font-weight:400;white-space:nowrap;transform:scaleX(1.0334);transform-origin:0 0;">: Authentication Service</span>
<div style="position:absolute;left:652px;top:621px;width:131px;height:26px;background:transparent;border:1px solid #c2c4cc;border-radius:3.5px;"></div>
<span style="position:absolute;left:666.6px;top:628.77px;font-size:11.5px;line-height:1;color:#3e4147;font-weight:700;white-space:nowrap;transform:scaleX(0.9932);transform-origin:0 0;">application_id</span>
<span style="position:absolute;left:743.4px;top:628.77px;font-size:11.5px;line-height:1;color:#5b5f67;font-weight:400;white-space:nowrap;transform:scaleX(1.0282);transform-origin:0 0;">: 224</span>
<div style="position:absolute;left:789px;top:621px;width:115px;height:26px;background:transparent;border:1px solid #c2c4cc;border-radius:3.5px;"></div>
<span style="position:absolute;left:803.6px;top:628.77px;font-size:11.5px;line-height:1;color:#3e4147;font-weight:700;white-space:nowrap;transform:scaleX(1.0103);transform-origin:0 0;">type</span>
<span style="position:absolute;left:827.5px;top:628.77px;font-size:11.5px;line-height:1;color:#5b5f67;font-weight:400;white-space:nowrap;transform:scaleX(1.0248);transform-origin:0 0;">: application</span>
<div style="position:absolute;left:910px;top:621px;width:145px;height:26px;background:transparent;border:1px solid #c2c4cc;border-radius:3.5px;"></div>
<span style="position:absolute;left:924.6px;top:628.77px;font-size:11.5px;line-height:1;color:#3e4147;font-weight:700;white-space:nowrap;">vendor</span>
<span style="position:absolute;left:962.8000000000001px;top:628.77px;font-size:11.5px;line-height:1;color:#5b5f67;font-weight:400;white-space:nowrap;transform:scaleX(1.0221);transform-origin:0 0;">: AppDynamics</span>
<svg style="left:0;top:0" width="1910" height="880"><polygon points="1251.85,588.90 1255.72,588.90 1255.72,608.70 1251.37,608.70 1251.37,594.89 1248.14,597.72 1245.70,595.21" fill="#403f46"/></svg>
<span style="position:absolute;left:1267px;top:597.35px;font-size:14px;line-height:1;color:#45484f;font-weight:400;white-space:nowrap;transform:scaleX(1.1543);transform-origin:0 0;">0</span>
<span style="position:absolute;left:1404px;top:585.60px;font-size:28px;line-height:1;color:#403f46;font-weight:700;white-space:nowrap;-webkit-text-stroke:0.8px #403f46;transform:scaleX(1.0488);transform-origin:0 0;">301</span>
<span style="position:absolute;left:1462px;top:597.35px;font-size:14px;line-height:1;color:#45484f;font-weight:400;white-space:nowrap;transform:scaleX(1.1543);transform-origin:0 0;">0</span>
<span style="position:absolute;left:1596px;top:585.60px;font-size:28px;line-height:1;color:#403f46;font-weight:700;white-space:nowrap;-webkit-text-stroke:0.8px #403f46;transform:scaleX(1.1555);transform-origin:0 0;">0</span>
<span style="position:absolute;left:1624px;top:597.35px;font-size:14px;line-height:1;color:#45484f;font-weight:400;white-space:nowrap;transform:scaleX(1.1543);transform-origin:0 0;">0</span>
<span style="position:absolute;left:1773px;top:585.60px;font-size:28px;line-height:1;color:#403f46;font-weight:700;white-space:nowrap;-webkit-text-stroke:0.8px #403f46;transform:scaleX(1.1559);transform-origin:0 0;">404</span>
<span style="position:absolute;left:1836px;top:597.35px;font-size:14px;line-height:1;color:#45484f;font-weight:400;white-space:nowrap;transform:scaleX(1.1543);transform-origin:0 0;">0</span>
<div style="position:absolute;left:15px;top:656px;width:1890px;height:112px;background:#ffffff;"></div>
<span style="position:absolute;left:27px;top:687.15px;font-size:14px;line-height:1;color:#1a6fb5;font-weight:400;white-space:nowrap;">Authentication</span>
<span style="position:absolute;left:27px;top:721.15px;font-size:14px;line-height:1;color:#1a6fb5;font-weight:400;white-space:nowrap;transform:scaleX(0.9810);transform-origin:0 0;">Service:225:monty4132567890235567.saas.appdynamics.com:443</span>
<svg style="left:461.3px;top:701.6px" width="16.6" height="16.6" viewBox="0 0 16 16"><circle cx="8" cy="8" r="7.9" fill="#4d9554"/><path d="M4 8.5L6.9 11L11.5 5.9" fill="none" stroke="#fff" stroke-width="2.2"/></svg>
<span style="position:absolute;left:483px;top:704.15px;font-size:14px;line-height:1;color:#3e424a;font-weight:400;white-space:nowrap;">Active</span>
<span style="position:absolute;left:545.2px;top:674.15px;font-size:14px;line-height:1;color:#3e424a;font-weight:400;white-space:nowrap;transform:scaleX(0.9948);transform-origin:0 0;">Mon, 26 Jul</span>
<span style="position:absolute;left:545.2px;top:694.15px;font-size:14px;line-height:1;color:#3e424a;font-weight:400;white-space:nowrap;transform:scaleX(0.9308);transform-origin:0 0;">2021</span>
<span style="position:absolute;left:545.2px;top:714.15px;font-size:14px;line-height:1;color:#3e424a;font-weight:400;white-space:nowrap;transform:scaleX(1.0459);transform-origin:0 0;">04:00:09</span>
<span style="position:absolute;left:545.2px;top:734.15px;font-size:14px;line-height:1;color:#3e424a;font-weight:400;white-space:nowrap;transform:scaleX(0.9322);transform-origin:0 0;">GMT</span>
<div style="position:absolute;left:652px;top:667px;width:512px;height:26px;background:transparent;border:1px solid #c2c4cc;border-radius:3.5px;"></div>
<span style="position:absolute;left:666.6px;top:674.77px;font-size:11.5px;line-height:1;color:#3e4147;font-weight:700;white-space:nowrap;transform:scaleX(1.0106);transform-origin:0 0;">app_title</span>
<span style="position:absolute;left:714.4px;top:674.77px;font-size:11.5px;line-height:1;color:#5b5f67;font-weight:400;white-space:nowrap;transform:scaleX(1.0255);transform-origin:0 0;">: Authentication Service:225:monty4132567890235567.saas.appdynamics.com:443</span>
<div style="position:absolute;left:652px;top:700px;width:217px;height:26px;background:transparent;border:1px solid #c2c4cc;border-radius:3.5px;"></div>
<span style="position:absolute;left:666.6px;top:707.77px;font-size:11.5px;line-height:1;color:#3e4147;font-weight:700;white-space:nowrap;transform:scaleX(0.9933);transform-origin:0 0;">account</span>
<span style="position:absolute;left:710.4px;top:707.77px;font-size:11.5px;line-height:1;color:#5b5f67;font-weight:400;white-space:nowrap;transform:scaleX(1.0368);transform-origin:0 0;">: monty4132567890235567</span>
<div style="position:absolute;left:875px;top:700px;width:209px;height:26px;background:transparent;border:1px solid #c2c4cc;border-radius:3.5px;"></div>
<span style="position:absolute;left:889.6px;top:707.77px;font-size:11.5px;line-height:1;color:#3e4147;font-weight:700;white-space:nowrap;transform:scaleX(1.0054);transform-origin:0 0;">app_name</span>
<span style="position:absolute;left:946.8000000000001px;top:707.77px;font-size:11.5px;line-height:1;color:#5b5f67;font-weight:400;white-space:nowrap;transform:scaleX(1.0334);transform-origin:0 0;">: Authentication Service</span>
<div style="position:absolute;left:652px;top:733px;width:131px;height:26px;background:transparent;border:1px solid #c2c4cc;border-radius:3.5px;"></div>
<span style="position:absolute;left:666.6px;top:740.77px;font-size:11.5px;line-height:1;color:#3e4147;font-weight:700;white-space:nowrap;transform:scaleX(0.9932);transform-origin:0 0;">application_id</span>
<span style="position:absolute;left:743.4px;top:740.77px;font-size:11.5px;line-height:1;color:#5b5f67;font-weight:400;white-space:nowrap;transform:scaleX(1.0282);transform-origin:0 0;">: 225</span>
<div style="position:absolute;left:789px;top:733px;width:115px;height:26px;background:transparent;border:1px solid #c2c4cc;border-radius:3.5px;"></div>
<span style="position:absolute;left:803.6px;top:740.77px;font-size:11.5px;line-height:1;color:#3e4147;font-weight:700;white-space:nowrap;transform:scaleX(1.0103);transform-origin:0 0;">type</span>
<span style="position:absolute;left:827.5px;top:740.77px;font-size:11.5px;line-height:1;color:#5b5f67;font-weight:400;white-space:nowrap;transform:scaleX(1.0248);transform-origin:0 0;">: application</span>
<div style="position:absolute;left:910px;top:733px;width:145px;height:26px;background:transparent;border:1px solid #c2c4cc;border-radius:3.5px;"></div>
<span style="position:absolute;left:924.6px;top:740.77px;font-size:11.5px;line-height:1;color:#3e4147;font-weight:700;white-space:nowrap;">vendor</span>
<span style="position:absolute;left:962.8000000000001px;top:740.77px;font-size:11.5px;line-height:1;color:#5b5f67;font-weight:400;white-space:nowrap;transform:scaleX(1.0221);transform-origin:0 0;">: AppDynamics</span>
<svg style="left:0;top:0" width="1910" height="880"><polygon points="1251.85,700.90 1255.72,700.90 1255.72,720.70 1251.37,720.70 1251.37,706.89 1248.14,709.72 1245.70,707.21" fill="#403f46"/></svg>
<span style="position:absolute;left:1267px;top:709.35px;font-size:14px;line-height:1;color:#45484f;font-weight:400;white-space:nowrap;transform:scaleX(1.1543);transform-origin:0 0;">0</span>
<span style="position:absolute;left:1404px;top:697.60px;font-size:28px;line-height:1;color:#403f46;font-weight:700;white-space:nowrap;-webkit-text-stroke:0.8px #403f46;transform:scaleX(1.0488);transform-origin:0 0;">154</span>
<span style="position:absolute;left:1462px;top:709.35px;font-size:14px;line-height:1;color:#45484f;font-weight:400;white-space:nowrap;transform:scaleX(1.1543);transform-origin:0 0;">0</span>
<span style="position:absolute;left:1596px;top:697.60px;font-size:28px;line-height:1;color:#403f46;font-weight:700;white-space:nowrap;-webkit-text-stroke:0.8px #403f46;transform:scaleX(1.1555);transform-origin:0 0;">0</span>
<span style="position:absolute;left:1624px;top:709.35px;font-size:14px;line-height:1;color:#45484f;font-weight:400;white-space:nowrap;transform:scaleX(1.1543);transform-origin:0 0;">0</span>
<span style="position:absolute;left:1773px;top:697.60px;font-size:28px;line-height:1;color:#403f46;font-weight:700;white-space:nowrap;-webkit-text-stroke:0.8px #403f46;transform:scaleX(1.1559);transform-origin:0 0;">439</span>
<span style="position:absolute;left:1836px;top:709.35px;font-size:14px;line-height:1;color:#45484f;font-weight:400;white-space:nowrap;transform:scaleX(1.1543);transform-origin:0 0;">0</span>
<div style="position:absolute;left:15px;top:768px;width:1890px;height:112px;background:#f3f3f7;"></div>
<span style="position:absolute;left:27px;top:799.15px;font-size:14px;line-height:1;color:#1a6fb5;font-weight:400;white-space:nowrap;">Authentication</span>
<span style="position:absolute;left:27px;top:833.15px;font-size:14px;line-height:1;color:#1a6fb5;font-weight:400;white-space:nowrap;transform:scaleX(0.9810);transform-origin:0 0;">Service:226:monty4132567890235567.saas.appdynamics.com:443</span>
<svg style="left:461.3px;top:813.6px" width="16.6" height="16.6" viewBox="0 0 16 16"><circle cx="8" cy="8" r="7.9" fill="#4d9554"/><path d="M4 8.5L6.9 11L11.5 5.9" fill="none" stroke="#fff" stroke-width="2.2"/></svg>
<span style="position:absolute;left:483px;top:816.15px;font-size:14px;line-height:1;color:#3e424a;font-weight:400;white-space:nowrap;">Active</span>
<span style="position:absolute;left:545.2px;top:786.15px;font-size:14px;line-height:1;color:#3e424a;font-weight:400;white-space:nowrap;transform:scaleX(0.9948);transform-origin:0 0;">Mon, 26 Jul</span>
<span style="position:absolute;left:545.2px;top:806.15px;font-size:14px;line-height:1;color:#3e424a;font-weight:400;white-space:nowrap;transform:scaleX(0.9308);transform-origin:0 0;">2021</span>
<span style="position:absolute;left:545.2px;top:826.15px;font-size:14px;line-height:1;color:#3e424a;font-weight:400;white-space:nowrap;transform:scaleX(1.0459);transform-origin:0 0;">04:00:09</span>
<span style="position:absolute;left:545.2px;top:846.15px;font-size:14px;line-height:1;color:#3e424a;font-weight:400;white-space:nowrap;transform:scaleX(0.9322);transform-origin:0 0;">GMT</span>
<div style="position:absolute;left:652px;top:779px;width:512px;height:26px;background:transparent;border:1px solid #c2c4cc;border-radius:3.5px;"></div>
<span style="position:absolute;left:666.6px;top:786.77px;font-size:11.5px;line-height:1;color:#3e4147;font-weight:700;white-space:nowrap;transform:scaleX(1.0106);transform-origin:0 0;">app_title</span>
<span style="position:absolute;left:714.4px;top:786.77px;font-size:11.5px;line-height:1;color:#5b5f67;font-weight:400;white-space:nowrap;transform:scaleX(1.0255);transform-origin:0 0;">: Authentication Service:226:monty4132567890235567.saas.appdynamics.com:443</span>
<div style="position:absolute;left:652px;top:812px;width:217px;height:26px;background:transparent;border:1px solid #c2c4cc;border-radius:3.5px;"></div>
<span style="position:absolute;left:666.6px;top:819.77px;font-size:11.5px;line-height:1;color:#3e4147;font-weight:700;white-space:nowrap;transform:scaleX(0.9933);transform-origin:0 0;">account</span>
<span style="position:absolute;left:710.4px;top:819.77px;font-size:11.5px;line-height:1;color:#5b5f67;font-weight:400;white-space:nowrap;transform:scaleX(1.0368);transform-origin:0 0;">: monty4132567890235567</span>
<div style="position:absolute;left:875px;top:812px;width:209px;height:26px;background:transparent;border:1px solid #c2c4cc;border-radius:3.5px;"></div>
<span style="position:absolute;left:889.6px;top:819.77px;font-size:11.5px;line-height:1;color:#3e4147;font-weight:700;white-space:nowrap;transform:scaleX(1.0054);transform-origin:0 0;">app_name</span>
<span style="position:absolute;left:946.8000000000001px;top:819.77px;font-size:11.5px;line-height:1;color:#5b5f67;font-weight:400;white-space:nowrap;transform:scaleX(1.0334);transform-origin:0 0;">: Authentication Service</span>
<div style="position:absolute;left:652px;top:845px;width:131px;height:26px;background:transparent;border:1px solid #c2c4cc;border-radius:3.5px;"></div>
<span style="position:absolute;left:666.6px;top:852.77px;font-size:11.5px;line-height:1;color:#3e4147;font-weight:700;white-space:nowrap;transform:scaleX(0.9932);transform-origin:0 0;">application_id</span>
<span style="position:absolute;left:743.4px;top:852.77px;font-size:11.5px;line-height:1;color:#5b5f67;font-weight:400;white-space:nowrap;transform:scaleX(1.0282);transform-origin:0 0;">: 226</span>
<div style="position:absolute;left:789px;top:845px;width:115px;height:26px;background:transparent;border:1px solid #c2c4cc;border-radius:3.5px;"></div>
<span style="position:absolute;left:803.6px;top:852.77px;font-size:11.5px;line-height:1;color:#3e4147;font-weight:700;white-space:nowrap;transform:scaleX(1.0103);transform-origin:0 0;">type</span>
<span style="position:absolute;left:827.5px;top:852.77px;font-size:11.5px;line-height:1;color:#5b5f67;font-weight:400;white-space:nowrap;transform:scaleX(1.0248);transform-origin:0 0;">: application</span>
<div style="position:absolute;left:910px;top:845px;width:145px;height:26px;background:transparent;border:1px solid #c2c4cc;border-radius:3.5px;"></div>
<span style="position:absolute;left:924.6px;top:852.77px;font-size:11.5px;line-height:1;color:#3e4147;font-weight:700;white-space:nowrap;">vendor</span>
<span style="position:absolute;left:962.8000000000001px;top:852.77px;font-size:11.5px;line-height:1;color:#5b5f67;font-weight:400;white-space:nowrap;transform:scaleX(1.0221);transform-origin:0 0;">: AppDynamics</span>
<svg style="left:0;top:0" width="1910" height="880"><polygon points="1251.85,812.90 1255.72,812.90 1255.72,832.70 1251.37,832.70 1251.37,818.89 1248.14,821.72 1245.70,819.21" fill="#403f46"/></svg>
<span style="position:absolute;left:1267px;top:821.35px;font-size:14px;line-height:1;color:#45484f;font-weight:400;white-space:nowrap;transform:scaleX(1.1543);transform-origin:0 0;">0</span>
<span style="position:absolute;left:1402px;top:809.60px;font-size:28px;line-height:1;color:#403f46;font-weight:700;white-space:nowrap;-webkit-text-stroke:0.8px #403f46;transform:scaleX(1.1344);transform-origin:0 0;">263</span>
<span style="position:absolute;left:1464px;top:821.35px;font-size:14px;line-height:1;color:#45484f;font-weight:400;white-space:nowrap;transform:scaleX(1.1543);transform-origin:0 0;">0</span>
<span style="position:absolute;left:1596px;top:809.60px;font-size:28px;line-height:1;color:#403f46;font-weight:700;white-space:nowrap;-webkit-text-stroke:0.8px #403f46;transform:scaleX(1.1555);transform-origin:0 0;">0</span>
<span style="position:absolute;left:1624px;top:821.35px;font-size:14px;line-height:1;color:#45484f;font-weight:400;white-space:nowrap;transform:scaleX(1.1543);transform-origin:0 0;">0</span>
<span style="position:absolute;left:1773px;top:809.60px;font-size:28px;line-height:1;color:#403f46;font-weight:700;white-space:nowrap;-webkit-text-stroke:0.8px #403f46;transform:scaleX(1.1559);transform-origin:0 0;">359</span>
<span style="position:absolute;left:1836px;top:821.35px;font-size:14px;line-height:1;color:#45484f;font-weight:400;white-space:nowrap;transform:scaleX(1.1543);transform-origin:0 0;">0</span>
</div></body></html>
